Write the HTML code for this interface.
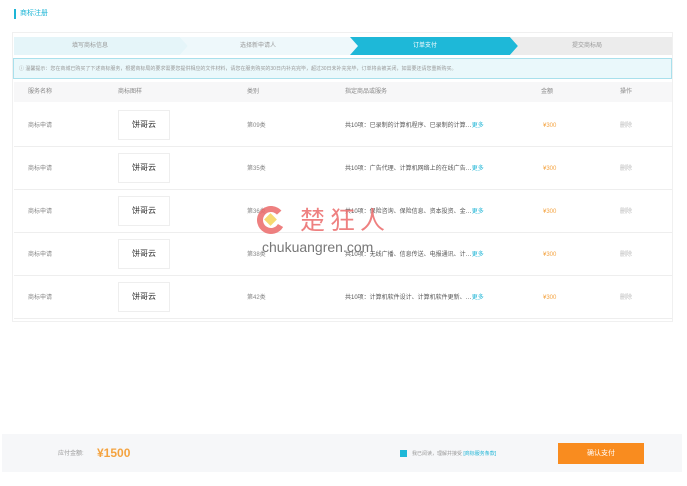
<!DOCTYPE html>
<html><head><meta charset="utf-8"><style>
*{margin:0;padding:0;box-sizing:border-box}
body{width:687px;height:486px;background:#fff;font-family:"Liberation Sans","Noto Sans CJK SC",sans-serif;position:relative;overflow:hidden;color:#666}
.a{position:absolute}
.t{font-size:6px;line-height:8px;color:#888;white-space:nowrap;display:block}
.row{position:absolute;left:14px;width:658px;height:43px;border-bottom:1px solid #eee}
.row .t{position:absolute;top:18px}
.logo{position:absolute;left:104px;top:6px;width:52px;height:30px;border:1px solid #eee;font-size:8px;color:#333;text-align:center;line-height:28px}
</style></head><body>
<div class="a" style="left:14px;top:9px;width:2px;height:10px;background:#1db5d6"></div>
<div class="a t" style="left:20px;top:10px;font-size:7px;color:#1db5d6">商标注册</div>
<div class="a" style="left:12px;top:32px;width:661px;height:290px;border:1px solid #f0f0f0"></div>
<svg class="a" style="left:14px;top:37px" width="658" height="18">
<polygon points="0,0 166,0 174,9 166,18 0,18" fill="#e5f5f9"/>
<polygon points="166,0 336,0 344,9 336,18 166,18 174,9" fill="#eef8fb"/>
<polygon points="336,0 496,0 504,9 496,18 336,18 344,9" fill="#1eb8d8"/>
<polygon points="496,0 658,0 658,18 496,18 504,9" fill="#ececec"/>
</svg>
<div class="a t" style="left:72px;top:42px;color:#999">填写商标信息</div>
<div class="a t" style="left:240px;top:42px;color:#999">选择新申请人</div>
<div class="a t" style="left:413px;top:42px;color:#fff">订单支付</div>
<div class="a t" style="left:572px;top:42px;color:#999">提交商标局</div>
<div class="a" style="left:13px;top:58px;width:659px;height:21px;background:#eaf8fb;border:1px solid #a9e0ec"></div>
<div class="a t" style="left:19px;top:65px;font-size:5px;color:#999">ⓘ 温馨提示：您在商城已购买了下述商标服务，根据商标局的要求需要您提供相应的文件材料，请您在服务购买的30日内补充完毕，超过30日未补充完毕，订单将会被关闭，如需要还请您重新购买。</div>
<div class="a" style="left:14px;top:82px;width:658px;height:20px;background:#f7f7f8"></div>
<div class="a t" style="left:28px;top:88px">服务名称</div>
<div class="a t" style="left:118px;top:88px">商标图样</div>
<div class="a t" style="left:247px;top:88px">类别</div>
<div class="a t" style="left:345px;top:88px">指定商品或服务</div>
<div class="a t" style="left:541px;top:88px">金额</div>
<div class="a t" style="left:620px;top:88px">操作</div>

<div class="row" style="top:104px"><span class="t" style="left:14px">商标申请</span><div class="logo">饼哥云</div><span class="t" style="left:233px">第09类</span><span class="t" style="left:331px;color:#555">共10项：已录制的计算机程序、已录制的计算…<span style="color:#1db5d6">更多</span></span><span class="t" style="left:529px;color:#f4a340">¥300</span><span class="t" style="left:606px;color:#bbb">删除</span></div>
<div class="row" style="top:147px"><span class="t" style="left:14px">商标申请</span><div class="logo">饼哥云</div><span class="t" style="left:233px">第35类</span><span class="t" style="left:331px;color:#555">共10项：广告代理、计算机网络上的在线广告…<span style="color:#1db5d6">更多</span></span><span class="t" style="left:529px;color:#f4a340">¥300</span><span class="t" style="left:606px;color:#bbb">删除</span></div>
<div class="row" style="top:190px"><span class="t" style="left:14px">商标申请</span><div class="logo">饼哥云</div><span class="t" style="left:233px">第36类</span><span class="t" style="left:331px;color:#555">共10项：保险咨询、保险信息、资本投资、金…<span style="color:#1db5d6">更多</span></span><span class="t" style="left:529px;color:#f4a340">¥300</span><span class="t" style="left:606px;color:#bbb">删除</span></div>
<div class="row" style="top:233px"><span class="t" style="left:14px">商标申请</span><div class="logo">饼哥云</div><span class="t" style="left:233px">第38类</span><span class="t" style="left:331px;color:#555">共10项：无线广播、信息传送、电报通讯、计…<span style="color:#1db5d6">更多</span></span><span class="t" style="left:529px;color:#f4a340">¥300</span><span class="t" style="left:606px;color:#bbb">删除</span></div>
<div class="row" style="top:276px"><span class="t" style="left:14px">商标申请</span><div class="logo">饼哥云</div><span class="t" style="left:233px">第42类</span><span class="t" style="left:331px;color:#555">共10项：计算机软件设计、计算机软件更新、…<span style="color:#1db5d6">更多</span></span><span class="t" style="left:529px;color:#f4a340">¥300</span><span class="t" style="left:606px;color:#bbb">删除</span></div>

<svg class="a" style="left:257px;top:206px" width="30" height="30" opacity="0.85"><circle cx="14" cy="14" r="11" fill="none" stroke="#ec6b6b" stroke-width="6" stroke-dasharray="55 15" transform="rotate(30 14 14)"/><rect x="9" y="9" width="9" height="9" fill="#f5d35a" transform="rotate(45 13.5 13.5)"/></svg>
<div class="a" style="left:300px;top:204px;font-size:25px;color:#ec6b6b;opacity:.85;letter-spacing:5px;font-family:'Noto Sans CJK SC',sans-serif;line-height:30px">楚狂人</div>
<div class="a" style="left:262px;top:239px;font-size:14px;color:#777;line-height:16px">chukuangren.com</div>

<div class="a" style="left:2px;top:434px;width:680px;height:38px;background:#f6f7f9"></div>
<div class="a t" style="left:58px;top:450px;color:#999">应付金额:</div>
<div class="a" style="left:97px;top:446px;font-size:12px;line-height:14px;font-weight:bold;color:#f4a340">¥1500</div>
<div class="a" style="left:400px;top:450px;width:7px;height:7px;background:#1eb8d8"></div>
<div class="a t" style="left:412px;top:450px;font-size:5px;color:#999">我已阅读，理解并接受 <span style="color:#1db5d6">[商标服务条款]</span></div>
<div class="a" style="left:558px;top:443px;width:86px;height:21px;background:#f98c1f;color:#fff;font-size:7px;text-align:center;line-height:21px">确认支付</div>
</body></html>
